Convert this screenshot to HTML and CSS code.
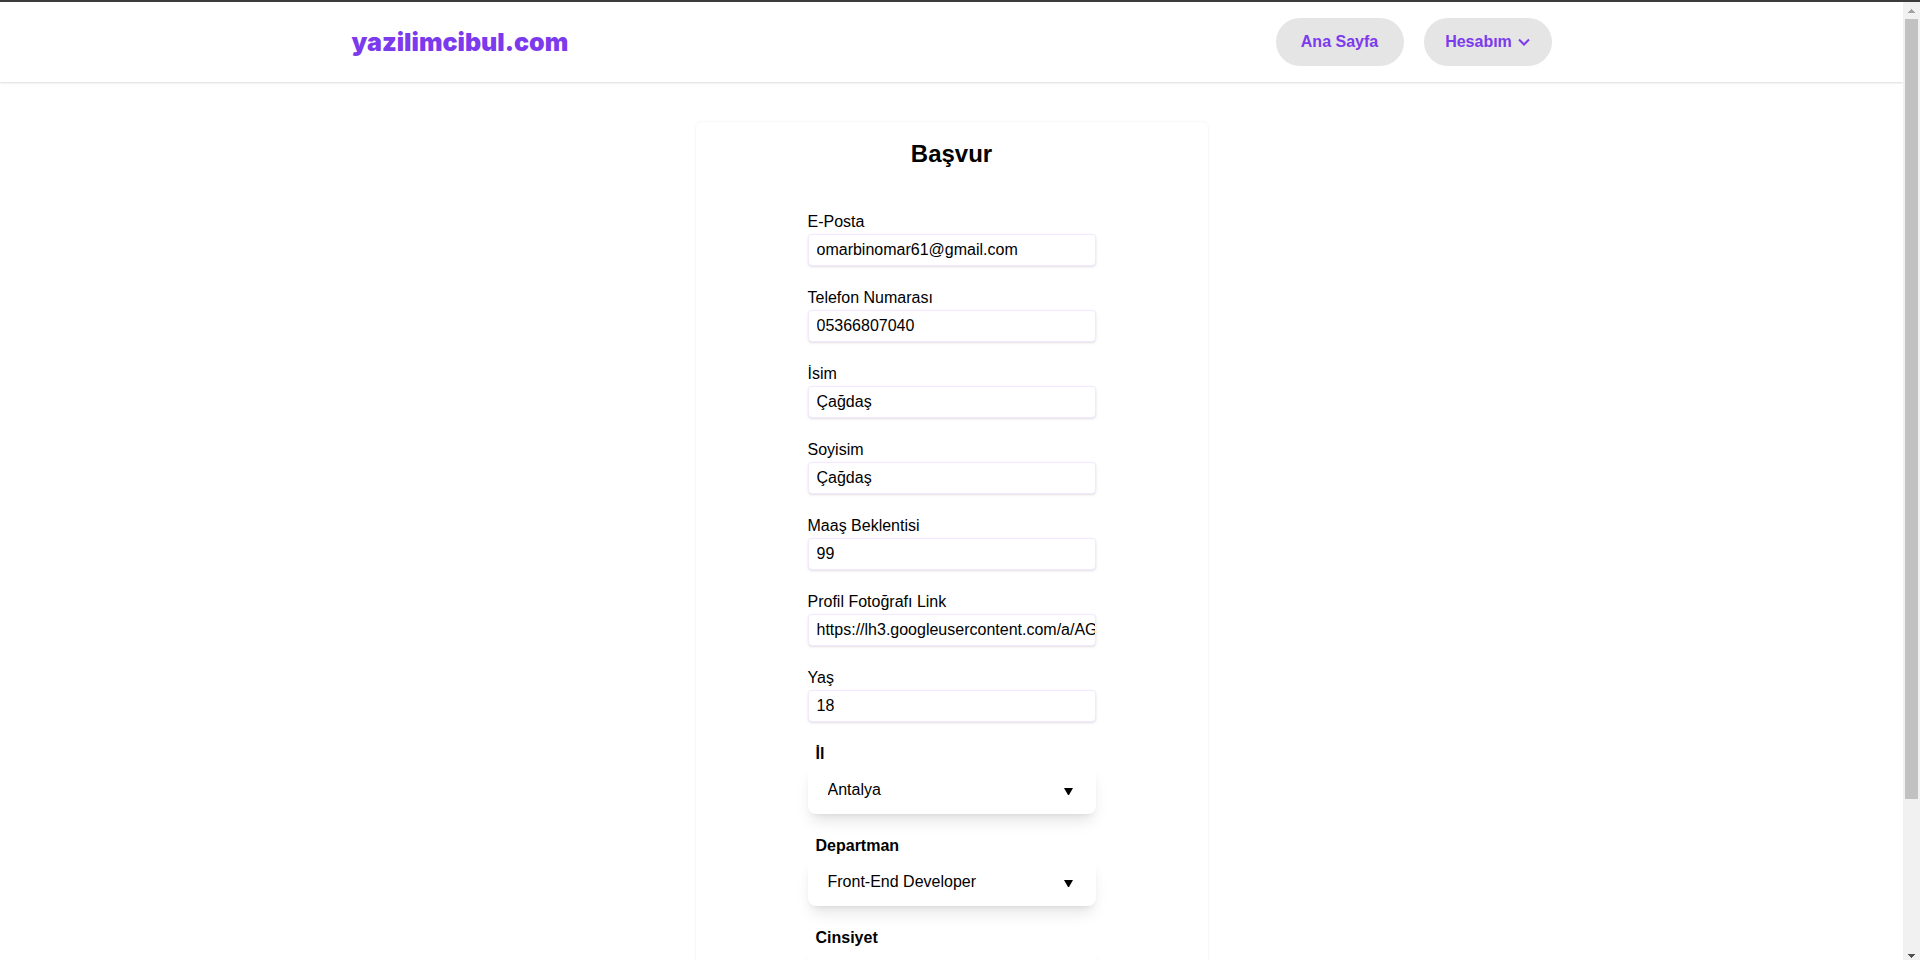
FILE: index.html
```html
<!DOCTYPE html>
<html lang="tr">
<head>
<meta charset="utf-8">
<title>yazilimcibul.com</title>
<link rel="stylesheet" href="styles.css">
</head>
<body>
<div class="window">
  <div class="page">
    <header class="navbar">
      <nav class="navbar-inner">
        <a class="brand" href="#">yazilimcibul.com</a>
        <div class="nav-actions">
          <a class="pill" href="#">Ana Sayfa</a>
          <button class="pill" type="button">Hesabım
            <svg class="chevron" viewBox="0 0 12 8" aria-hidden="true"><path d="M1 1.500 6 6.500l5-5"/></svg>
          </button>
        </div>
      </nav>
    </header>
    <main class="card">
      <h1 class="title">Başvur</h1>
      <form class="form">
        <div class="field"><label for="email">E-Posta</label><input class="input" id="email" type="text" value="omarbinomar61@gmail.com"></div>
        <div class="field"><label for="phone">Telefon Numarası</label><input class="input" id="phone" type="text" value="05366807040"></div>
        <div class="field"><label for="name">İsim</label><input class="input" id="name" type="text" value="Çağdaş"></div>
        <div class="field"><label for="surname">Soyisim</label><input class="input" id="surname" type="text" value="Çağdaş"></div>
        <div class="field"><label for="salary">Maaş Beklentisi</label><input class="input" id="salary" type="text" value="99"></div>
        <div class="field"><label for="photo">Profil Fotoğrafı Link</label><input class="input" id="photo" type="text" value="https://lh3.googleusercontent.com/a/AGNmyx"></div>
        <div class="field"><label for="age">Yaş</label><input class="input" id="age" type="text" value="18"></div>
        <div class="field"><label class="select-label" for="city">İl</label>
          <div class="select-box"><select class="select" id="city"><option>Antalya</option></select><svg class="caret" viewBox="0 0 9 7" aria-hidden="true"><path d="M0 0h9L5 7H4z"/></svg></div></div>
        <div class="field"><label class="select-label" for="department">Departman</label>
          <div class="select-box"><select class="select" id="department"><option>Front-End Developer</option></select><svg class="caret" viewBox="0 0 9 7" aria-hidden="true"><path d="M0 0h9L5 7H4z"/></svg></div></div>
        <div class="field"><label class="select-label" for="gender">Cinsiyet</label>
          <div class="select-box"><select class="select" id="gender"><option></option></select></div></div>
      </form>
    </main>
  </div>
  <div class="scrollbar" aria-hidden="true">
    <svg class="arrow arrow-up" viewBox="0 0 7 4"><path d="M3 0h1v1h1v1h1v1h1v1H0V3h1V2h1V1h1z"/></svg>
    <div class="track"><div class="thumb"></div></div>
    <svg class="arrow arrow-down" viewBox="0 0 7 4"><path d="M0 0h7v1H6v1H5v1H4v1H3V3H2V2H1V1H0z"/></svg>
  </div>
</div>
</body>
</html>
```

FILE: styles.css
```css
* { box-sizing: border-box; }

body {
  margin: 0;
  background: #fff;
  color: #000;
  font: 16px/24px "Liberation Sans", Arial, sans-serif;
}

.window {
  display: grid;
  grid-template-columns: 1fr 17px;
  grid-template-rows: minmax(0, 1fr);
  height: 100vh;
  overflow: hidden;
  border-top: 2px solid #3c3a3c;
}

.page { overflow: hidden; }

.navbar {
  padding: 16px;
  box-shadow: 0 1px 2px rgba(0, 0, 0, 0.14);
}

.navbar-inner {
  display: flex;
  align-items: center;
  justify-content: space-between;
  max-width: 1200px;
  margin: 0 auto;
}

.brand {
  color: #7c3aed;
  font: 900 25px/32px Inter, "Arial Black", sans-serif;
  text-decoration: none;
}

.nav-actions { display: flex; gap: 20px; }

.pill {
  display: flex;
  align-items: center;
  justify-content: center;
  gap: 6px;
  width: 128px;
  height: 48px;
  padding: 0;
  border: 0;
  border-radius: 24px;
  background: #e5e5e5;
  color: #7c3aed;
  font: inherit;
  font-weight: 700;
  text-decoration: none;
}

.chevron {
  width: 12px;
  height: 8px;
  fill: none;
  stroke: currentColor;
  stroke-width: 2;
}

.card {
  max-width: 512px;
  margin: 40px auto;
  padding: 16px;
  border-radius: 6px;
  box-shadow: 0 0 3px rgba(0, 0, 0, 0.08);
}

.title {
  margin: 0 0 40px;
  font-size: 24px;
  line-height: 32px;
  text-align: center;
}

.form {
  display: grid;
  gap: 20px;
  max-width: 288px;
  margin: 0 auto;
}

.field { display: flex; flex-direction: column; }

.input {
  width: 100%;
  height: 32px;
  padding: 0 0 0 8px;
  border: 1px solid #f3e8ff;
  border-radius: 4px;
  background: #fff;
  color: inherit;
  font: inherit;
  box-shadow: 0 1px 3px rgba(0, 0, 0, 0.1), 0 1px 2px -1px rgba(0, 0, 0, 0.1);
}

.select-label { padding-left: 8px; font-weight: 700; }

.select-box {
  display: grid;
  align-items: center;
  height: 48px;
  border-radius: 8px;
  background: #fff;
  box-shadow: 0 10px 15px -3px rgba(0, 0, 0, 0.1), 0 4px 6px -4px rgba(0, 0, 0, 0.1);
}

.select {
  grid-area: 1 / 1;
  width: 100%;
  height: 48px;
  padding: 0 20px;
  border: 0;
  background: transparent;
  color: inherit;
  font: inherit;
  appearance: none;
}

.caret {
  grid-area: 1 / 1;
  justify-self: end;
  width: 9px;
  height: 7px;
  margin: 2px 23px 0 0;
  pointer-events: none;
}

.scrollbar {
  display: flex;
  flex-direction: column;
  align-items: center;
  padding: 7px 0 2px;
  background: #f1f1f1;
}

.arrow { flex: none; width: 7px; height: 4px; }
.arrow-up { fill: #a3a3a3; }
.arrow-down { fill: #505050; }

.track { flex: 1; width: 13px; padding: 6px 0; }
.thumb { height: 84%; background: #c1c1c1; }
```
